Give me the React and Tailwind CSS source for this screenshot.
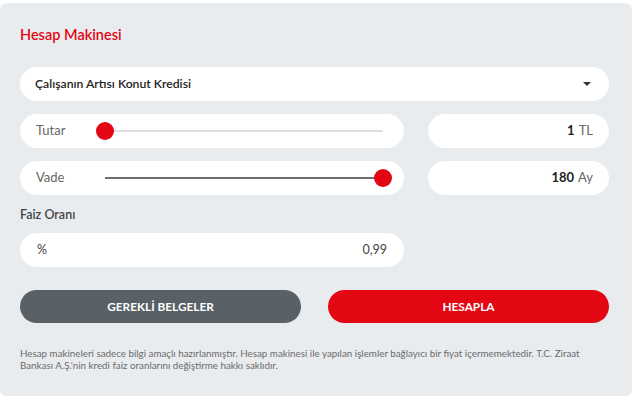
import { useState } from 'react'

function Slider({ label, value }) {
  // value: 0..1
  const pct = value * 100
  return (
    <div className="h-[34px] rounded-full bg-white flex items-center pl-4 pr-3">
      <span className="w-[60px] text-[13px] text-[#666]">{label}</span>
      <div className="relative flex-1 h-[18px]">
        <div className="absolute left-[9px] right-[9px] top-[8px] h-[2px] bg-[#dedede]">
          <div className="h-full bg-[#6d6d6d]" style={{ width: `${pct}%` }} />
        </div>
        <div
          className="absolute top-0 w-[18px] h-[18px] rounded-full bg-[#e30613]"
          style={{ left: `calc(${pct}% - ${pct * 0.18}px)` }}
        />
      </div>
    </div>
  )
}

function ValueBox({ value, unit }) {
  return (
    <div className="h-[34px] rounded-full bg-white flex items-center justify-end pr-4 text-[13px]">
      <span className="font-bold text-[#222]">{value}</span>
      <span className="ml-1 text-[#666]">{unit}</span>
    </div>
  )
}

export default function App() {
  const [product] = useState('Çalışanın Artısı Konut Kredisi')

  return (
    <div className="h-[401px] bg-white pt-[3px] font-['Lato',sans-serif]">
      <div className="w-[632px] h-[393px] bg-[#e9ecef] rounded-md pl-5 pr-[23px] pt-[22px]">
        <h2 className="h-5 leading-5 text-[14.5px] font-semibold text-[#e30613]">Hesap Makinesi</h2>

        <div className="mt-[22px] h-[34px] rounded-full bg-white flex items-center justify-between pl-[15px] pr-[18px]">
          <span className="text-[12.2px] font-semibold text-[#222]">{product}</span>
          <span className="w-0 h-0 border-l-[4px] border-r-[4px] border-t-[4px] border-l-transparent border-r-transparent border-t-[#333]" />
        </div>

        <div className="mt-[13px] grid grid-cols-[384px_181px] gap-x-6 gap-y-[13px]">
          <Slider label="Tutar" value={0} />
          <ValueBox value="1" unit="TL" />
          <Slider label="Vade" value={1} />
          <ValueBox value="180" unit="Ay" />
        </div>

        <div className="mt-[12px] h-4 leading-4 text-[12.5px] font-semibold text-[#444]">Faiz Oranı</div>

        <div className="mt-[10px] w-[384px] h-[34px] rounded-full bg-white flex items-center justify-between pl-[17px] pr-[17px] text-[12.5px] text-[#444]">
          <span>%</span>
          <span>0,99</span>
        </div>

        <div className="mt-[23px] grid grid-cols-2 gap-[27px]">
          <button className="h-[33px] rounded-full bg-[#5a6166] text-white text-[11.8px] font-bold">GEREKLİ BELGELER</button>
          <button className="h-[33px] rounded-full bg-[#e30613] text-white text-[11.8px] font-bold">HESAPLA</button>
        </div>

        <p className="mt-[24px] text-[9.8px] leading-[12px] text-[#6b6b6b] pr-5">
          Hesap makineleri sadece bilgi amaçlı hazırlanmıştır. Hesap makinesi ile yapılan işlemler bağlayıcı bir fiyat içermemektedir. T.C. Ziraat Bankası A.Ş.'nin kredi faiz oranlarını değiştirme hakkı saklıdır.
        </p>
      </div>
    </div>
  )
}
